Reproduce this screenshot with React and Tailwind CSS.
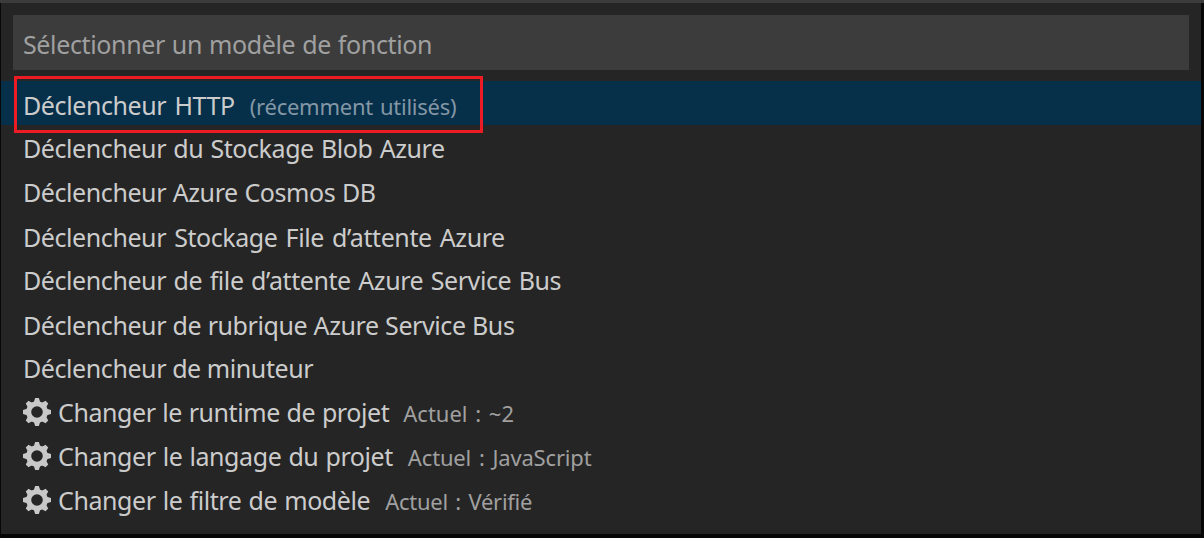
import { clsx } from "clsx";

const items = [
  { label: "Déclencheur HTTP", fit: "tracking-[-0.4px] [word-spacing:2px]", note: "(récemment utilisés)", noteFit: "pl-px tracking-[-0.25px] [word-spacing:1.5px]", active: true },
  { label: "Déclencheur du Stockage Blob Azure", fit: "[word-spacing:1.1px]" },
  { label: "Déclencheur Azure Cosmos DB", fit: "[word-spacing:0.6px]" },
  { label: "Déclencheur Stockage File d’attente Azure", fit: "[word-spacing:2px]", low: true },
  { label: "Déclencheur de file d’attente Azure Service Bus", fit: "[word-spacing:1.4px]" },
  { label: "Déclencheur de rubrique Azure Service Bus", fit: "[word-spacing:0.4px]", low: true },
  { label: "Déclencheur de minuteur", fit: "" },
  { label: "Changer le runtime de projet", fit: "[word-spacing:0.6px]", note: "Actuel : ~2", noteFit: "[word-spacing:2px]", gear: true },
  { label: "Changer le langage du projet", fit: "[word-spacing:1px]", note: "Actuel : JavaScript", noteFit: "pl-px tracking-[-0.16px] [word-spacing:2.2px]", gear: true },
  { label: "Changer le filtre de modèle", fit: "[word-spacing:1px]", note: "Actuel : Vérifié", noteFit: "pl-px tracking-[-0.26px] [word-spacing:2px]", gear: true },
];

function Gear() {
  return (
    <svg className="mt-0.5 mr-[7px] size-7 shrink-0 text-[#c8c8c8]" viewBox="0 0 28 28" fill="none" stroke="currentColor">
      <circle cx="14" cy="14" r="8.3" strokeWidth="5" />
      <g fill="currentColor" stroke="none">
        {[0, 45, 90, 135, 180, 225, 270, 315].map((a) => (
          <path key={a} d="M10.6 5 12.1 0H15.9L17.4 5Z" transform={`rotate(${a} 14 14)`} />
        ))}
      </g>
    </svg>
  );
}

export default function App() {
  return (
    <div className="h-[538px] w-[1204px] overflow-hidden bg-[#070707] font-['Noto_Sans','Open_Sans',sans-serif]">
      <div className="h-[3px] bg-[#3c3c3c]" />
      <div className="ml-px flex h-[531px] w-[1200px] flex-col bg-[#252525] pt-3">
        <div className="ml-3 flex h-[55px] w-[1176px] items-center bg-[#3c3c3c] pt-1 pl-2.5 text-[25px] text-[#a0a0a0]">
          <span className="whitespace-nowrap tracking-[-0.36px] [word-spacing:0.75px]">Sélectionner un modèle de fonction</span>
        </div>
        <div className="relative mt-[11px]">
          {items.map((it) => (
            <div
              key={it.label}
              className={clsx("flex h-11 items-center whitespace-nowrap pl-[22px]", it.active && "bg-[#062f4a]")}
            >
              {it.gear && <Gear />}
              <div className={clsx("flex items-baseline", it.active || it.low ? "pt-1" : "pt-0.5")}>
                <span className={clsx("text-[25px] leading-9 text-[#cccccc]", !it.active && "tracking-[-0.42px]", it.fit)}>{it.label}</span>
                {it.note && (
                  <span className={clsx("ml-3.5 text-[22px] leading-8", it.noteFit, it.active ? "text-[#8497a5]" : "text-[#a0a0a0]")}>
                    {it.note}
                  </span>
                )}
              </div>
            </div>
          ))}
          <div className="absolute -top-[5px] left-[13px] h-[57px] w-[469px] border-[3px] border-[#ed1c24]" />
        </div>
      </div>
    </div>
  );
}
